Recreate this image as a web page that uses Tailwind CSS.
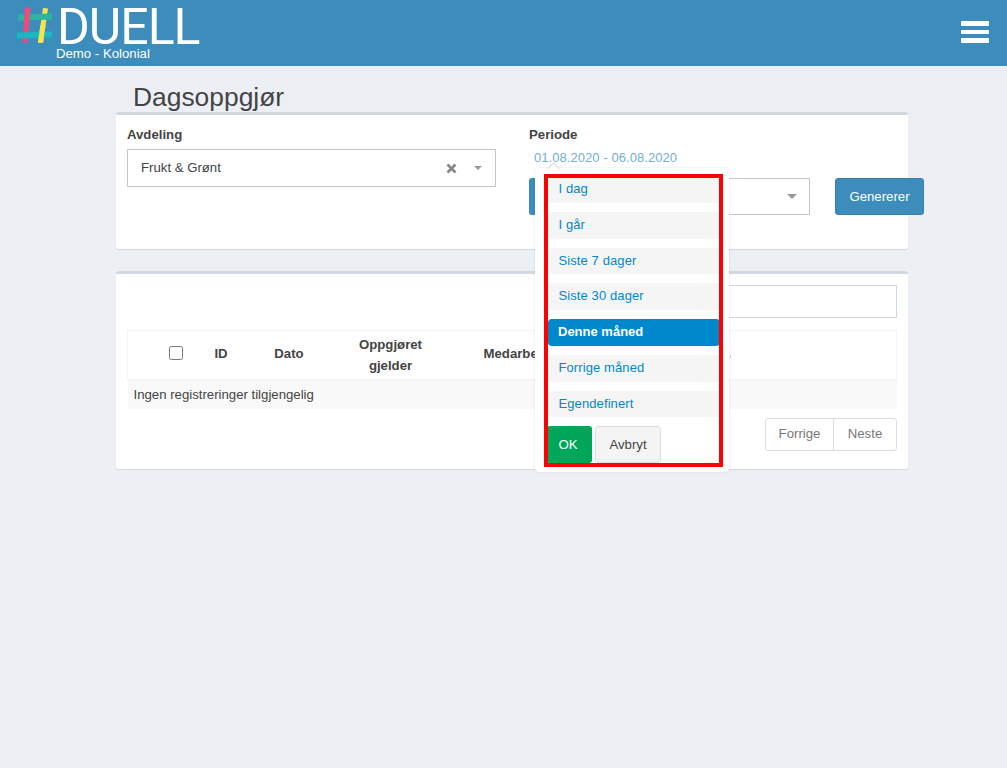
<!DOCTYPE html>
<html lang="no">
<head>
  <meta charset="UTF-8">
  <title>Dagsoppgjør</title>
  <script src="https://cdn.jsdelivr.net/npm/@tailwindcss/browser@4"></script>
</head>
<body class="bg-[#ecf0f5] font-['Liberation_Sans',Arial,sans-serif] text-[13.2px] text-[#444] min-h-[768px] relative overflow-hidden">

  <!-- Header -->
  <header class="h-[66px] bg-[#3c8dbc] flex justify-between items-start pl-[17px] pr-[18px]">
    <div class="flex items-start">
      <svg class="w-[36px] h-[40px] mt-[6px] shrink-0" viewBox="0 0 36 40">
        <path d="M26 2 L31 2.5 L26 37 L21 36.5Z" fill="#f4e34e"/>
        <path d="M1 8.5 L35 7.5 L35 13.5 L1 14.5Z" fill="#2bb5a0"/>
        <path d="M8 1 L13.5 1.5 L10.5 37 L5.5 36.5Z" fill="#ee4b7c"/>
        <path d="M0 26.5 L35 25.5 L35 31.5 L0 32.5Z" fill="#1ab8c4"/>
        <path d="M23.4 19 L28.5 19.5 L26 37 L21 36.5Z" fill="#f4e34e"/>
      </svg>
      <div class="ml-[4px] text-white">
        <div class="font-['Roboto',sans-serif] font-normal text-[50px] leading-[40px] mt-[7px] -tracking-[1px]">DUELL</div>
        <div class="font-medium leading-[14px] -ml-[1px]">Demo - Kolonial</div>
      </div>
    </div>
    <div class="flex flex-col gap-[4px] w-[28px] mt-[21px]">
      <div class="h-[4.5px] bg-white rounded-[1px]"></div>
      <div class="h-[4.5px] bg-white rounded-[1px]"></div>
      <div class="h-[4.5px] bg-white rounded-[1px]"></div>
    </div>
  </header>

  <main class="mx-[116px] w-[792px]">
    <h1 class="text-[26.4px] leading-[28px] ml-[17px] mt-[17px] h-[29px]">Dagsoppgjør</h1>

    <!-- Filter box -->
    <section class="bg-white border-t-[3px] border-[#d2d6de] rounded-[3px] shadow-[0_1px_1px_rgba(0,0,0,0.1)] h-[137px] px-[11px] pt-[12px] flex">
      <div class="w-[369px] shrink-0">
        <label class="block font-bold leading-[15px]">Avdeling</label>
        <div class="mt-[7px] h-[38px] border border-[#c4c4c4] flex items-center pl-[13px] pr-[13px]">
          <span class="flex-1">Frukt &amp; Grønt</span>
          <svg class="w-[11px] h-[11px] mr-[17px]" viewBox="0 0 11 11"><path d="M1.5 1.5 L9.5 9.5 M9.5 1.5 L1.5 9.5" stroke="#888" stroke-width="2.6"/></svg>
          <span class="w-0 h-0 border-x-[4px] border-x-transparent border-t-[4px] border-t-[#999]"></span>
        </div>
      </div>
      <div class="ml-[33px] shrink-0">
        <label class="block font-bold leading-[15px]">Periode</label>
        <div class="mt-[8px] ml-[5px] text-[13px] text-[#72afd2] leading-[15px] h-[15px] tracking-[0.06px]">01.08.2020 - 06.08.2020</div>
        <div class="mt-[13px] flex items-start">
          <div class="flex w-[281px] h-[37px]">
            <div class="w-[30px] bg-[#3c8dbc] rounded-l-[3px]"></div>
            <div class="flex-1 border border-[#c4c4c4] flex items-center justify-end pr-[12px]">
              <span class="w-0 h-0 border-x-[5px] border-x-transparent border-t-[5px] border-t-[#999]"></span>
            </div>
          </div>
          <button class="ml-[25px] h-[37px] w-[89px] bg-[#3c8dbc] border border-[#367fa9] rounded-[3px] text-white">Genererer</button>
        </div>
      </div>
    </section>

    <!-- Table box -->
    <section class="mt-[22px] bg-white border-t-[3px] border-[#d2d6de] rounded-[3px] shadow-[0_1px_1px_rgba(0,0,0,0.1)] h-[198px] px-[11px] pt-[11px]">
      <div class="flex justify-end">
        <div class="w-[300px] h-[33px] border border-[#d2d6de]"></div>
      </div>
      <table class="mt-[12px] w-[770px] table-fixed border-collapse">
        <thead>
          <tr class="h-[49px] border border-[#f4f4f4] border-b-2">
            <th class="w-[72px] pl-[25px]"><input type="checkbox" class="block mx-auto mb-[4px] w-[14px] h-[14px]"></th>
            <th class="w-[43px] font-bold pb-[2px]">ID</th>
            <th class="w-[93px] font-bold pb-[2px]">Dato</th>
            <th class="w-[110px] font-bold leading-[21px]">Oppgjøret<br>gjelder</th>
            <th class="font-bold text-left pl-[38px] pb-[2px]">Medarbeider</th>
          </tr>
        </thead>
        <tbody>
          <tr class="h-[29px] bg-[#f9f9f9]">
            <td colspan="5" class="pl-[6px]">Ingen registreringer tilgjengelig</td>
          </tr>
        </tbody>
      </table>
      <div class="mt-[9px] flex justify-end">
        <div class="flex h-[33px] border border-[#ddd] rounded-[3px] text-[#777]">
          <span class="w-[68px] flex items-center justify-center border-r border-[#ddd]">Forrige</span>
          <span class="w-[62px] flex items-center justify-center">Neste</span>
        </div>
      </div>
    </section>
  </main>

  <!-- sliver of a header link showing past the popup -->
  <div class="absolute left-[730px] top-[355px] w-[1px] h-[3px] bg-[#a8cdef]"></div>

  <!-- Date range popup -->
  <div class="absolute left-[535px] top-[168px] w-[194px] h-[304px] bg-white rounded-[4px] shadow-[0_0_2px_rgba(0,0,0,0.15)]">
    <div class="absolute -top-[4px] left-[14px] w-[9px] h-[9px] rotate-45 bg-white border-l border-t border-[#ddd]"></div>
    <div class="relative mt-[6px] ml-[9px] w-[179px] h-[293px] border-[4px] border-[#ff0000] overflow-hidden">
      <ul class="flex flex-col gap-[9px] -mt-[2px] -mr-[1px] text-[13px] text-[#08c] tracking-[0.1px]">
        <li class="h-[26.75px] bg-[#f5f5f5] rounded-[4px] pl-[10.5px] leading-[26px]">I dag</li>
        <li class="h-[26.75px] bg-[#f5f5f5] rounded-[4px] pl-[10.5px] leading-[26px]">I går</li>
        <li class="h-[26.75px] bg-[#f5f5f5] rounded-[4px] pl-[10.5px] leading-[26px]">Siste 7 dager</li>
        <li class="h-[26.75px] bg-[#f5f5f5] rounded-[4px] pl-[10.5px] leading-[26px]">Siste 30 dager</li>
        <li class="h-[26.75px] bg-[#08c] text-white font-bold tracking-normal rounded-[4px] pl-[10px] leading-[25px]">Denne måned</li>
        <li class="h-[26.75px] bg-[#f5f5f5] rounded-[4px] pl-[10.5px] leading-[25px]">Forrige måned</li>
        <li class="h-[26.75px] bg-[#f5f5f5] rounded-[4px] pl-[10.5px] leading-[25px]">Egendefinert</li>
      </ul>
      <div class="mt-[9px] flex gap-[3px] -ml-px">
        <button class="w-[45px] h-[37px] bg-[#00a65a] rounded-[3px] text-white pr-[3px]">OK</button>
        <button class="w-[66px] h-[37px] bg-[#f4f4f4] border border-[#ddd] rounded-[3px] text-[#444]">Avbryt</button>
      </div>
    </div>
  </div>
</body>
</html>
